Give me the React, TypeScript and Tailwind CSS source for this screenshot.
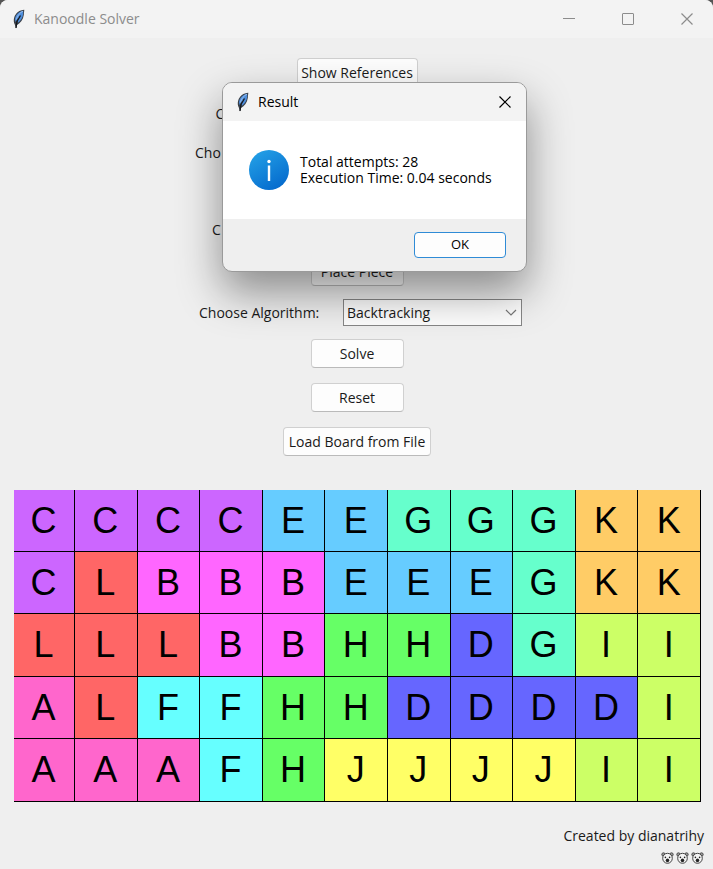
import React from "react";

const BOARD = ["CCCCEEGGGKK", "CLBBBEEEGKK", "LLLBBHHDGII", "ALFFHHDDDDI", "AAAFHJJJJII"];

const ROW_HEIGHTS = ["h-[62px]", "h-[62px]", "h-[63px]", "h-[62px]", "h-[63px]"];

const COLORS: Record<string, string> = {
  A: "bg-[#ff66cc]",
  B: "bg-[#ff66ff]",
  C: "bg-[#cc66ff]",
  D: "bg-[#6666ff]",
  E: "bg-[#66ccff]",
  F: "bg-[#66ffff]",
  G: "bg-[#66ffcc]",
  H: "bg-[#66ff66]",
  I: "bg-[#ccff66]",
  J: "bg-[#ffff66]",
  K: "bg-[#ffcc66]",
  L: "bg-[#ff6666]",
};

function Feather() {
  return (
    <svg width="15" height="20" viewBox="0 0 15 20" aria-hidden="true">
      <path d="M13.3 0.8 C8.500 1 4.600 4 3.200 8.500 C2.500 11 2.600 13.500 3.800 15.500 L5 19.500 L6 16 C9.500 14 12.200 10.500 12.800 6 Z" fill="#3a4048" />
      <path d="M12.200 1.800 C8 2.500 5 5.500 4 10 L4.500 13 L7 9 L6.600 14 C9.800 12 11.900 8.500 12.200 4.500 Z" fill="#4d8ddc" />
      <path d="M12 2.200 C9 3.500 6.500 6.500 5.300 10.500" fill="none" stroke="#a9c8ee" strokeWidth="0.8" />
      <path d="M9.500 6.500 L6 12.500 L5 19" fill="none" stroke="#15181c" strokeWidth="1.300" />
    </svg>
  );
}

function Cross() {
  return (
    <svg width="12" height="12" viewBox="0 0 12 12" fill="none" stroke="currentColor" aria-hidden="true">
      <path d="M0.500 0.500 L11.500 11.500 M11.500 0.500 L0.500 11.500" strokeWidth="1.200" />
    </svg>
  );
}

function Panda() {
  return (
    <svg width="13" height="12" viewBox="0 0 13 12" aria-hidden="true">
      <circle cx="2.500" cy="2.500" r="1.700" fill="#999" stroke="#444" strokeWidth="0.900" />
      <circle cx="10.500" cy="2.500" r="1.700" fill="#999" stroke="#444" strokeWidth="0.900" />
      <ellipse cx="6.500" cy="6.300" rx="4.800" ry="5" fill="#f4f4f4" stroke="#444" strokeWidth="1" />
      <circle cx="4.400" cy="5.400" r="0.800" fill="#222" />
      <circle cx="8.600" cy="5.400" r="0.800" fill="#222" />
      <ellipse cx="6.500" cy="8.300" rx="1.700" ry="1.900" fill="#222" />
    </svg>
  );
}

function PushButton({ children, width }: { children: React.ReactNode; width: string }) {
  return (
    <button
      type="button"
      className={`h-[29px] rounded-[4px] border border-[#d0d0d0] border-b-[#bababa] bg-[#fdfdfd] text-center whitespace-nowrap ${width}`}
    >
      {children}
    </button>
  );
}

function ResultDialog() {
  return (
    <div className="absolute inset-x-0 top-[82px] flex justify-center pl-9">
      <div
        role="dialog"
        aria-labelledby="result-title"
        className="w-[305px] overflow-hidden rounded-[10px] border border-[#9a9a9a] bg-[#efefef] text-black shadow-[0_20px_44px_rgba(0,0,0,0.42)]"
      >
        <header className="flex h-[38px] items-center bg-[#f3f3f3] pr-[15px] pb-px pl-3">
          <Feather />
          <h2 id="result-title" className="ml-2 flex-1 text-[14px]">Result</h2>
          <button type="button" aria-label="Close"><Cross /></button>
        </header>
        <div className="flex h-[98px] items-center gap-[11px] bg-white pl-[26px]">
          <svg width="40" height="40" viewBox="0 0 40 40" aria-hidden="true">
            <defs>
              <linearGradient id="info" x1="0.200" y1="0" x2="0.800" y2="1">
                <stop offset="0" stopColor="#23a0e6" />
                <stop offset="1" stopColor="#0468cc" />
              </linearGradient>
            </defs>
            <circle cx="20" cy="20" r="20" fill="url(#info)" />
            <rect x="18.800" y="15.500" width="2.400" height="15.500" fill="#fff" />
            <circle cx="20" cy="11.500" r="1.700" fill="#fff" />
          </svg>
          <p className="text-[14px] leading-4 whitespace-nowrap">
            Total attempts: 28
            <br />
            Execution Time: 0.04 seconds
          </p>
        </div>
        <footer className="flex h-[52px] items-center justify-end pr-5">
          <button type="button" className="h-[26px] w-[92px] rounded-[4px] border border-[#2f8bd6] bg-[#fdfdfd] text-[13px]">
            OK
          </button>
        </footer>
      </div>
    </div>
  );
}

export default function App() {
  return (
    <div className="bg-[#555]">
      <div className="relative min-h-screen overflow-hidden rounded-t-lg bg-[#efefef] font-['Open_Sans','Noto_Sans',sans-serif] text-[14px] text-[#1a1a1a]">
        <header className="flex h-[38px] items-center bg-[#f3f3f3] pr-5 pb-px pl-[11px] text-[#8c8c8c]">
          <Feather />
          <h1 className="ml-2 flex-1">Kanoodle Solver</h1>
          <div className="flex items-center gap-[47px]">
            <button type="button" aria-label="Minimize" className="flex h-3 w-3 items-center">
              <span className="h-px w-3 bg-current" />
            </button>
            <button type="button" aria-label="Maximize" className="h-3 w-3 rounded-[1px] border border-current" />
            <button type="button" aria-label="Close"><Cross /></button>
          </div>
        </header>

        <main className="pt-5 pr-3 pl-[14px]">
          <div className="flex flex-col items-center pr-px">
            <PushButton width="w-[121px]">Show References</PushButton>
            <div className="mt-[17px] flex w-[283px] leading-5"><span>C</span></div>
            <div className="mt-[19px] flex w-[324px] leading-5"><span>Cho</span></div>
            <div className="mt-[57px] flex w-[290px] leading-5"><span>C</span></div>
            <div className="mt-[17px] flex"><PushButton width="w-[93px]">Place Piece</PushButton></div>
            <div className="mt-[13px] flex items-center gap-[18px] pl-[7px]">
              <label htmlFor="algorithm" className="min-w-[126px]">Choose Algorithm:</label>
              <div className="relative">
                <select
                  id="algorithm"
                  className="block h-[27px] w-[179px] appearance-none border border-[#868686] bg-[#fdfdfd] pl-[3px]"
                >
                  <option>Backtracking</option>
                </select>
                <svg className="pointer-events-none absolute top-[10px] right-[5px]" width="12" height="8" viewBox="0 0 12 8" fill="none" stroke="#777" aria-hidden="true">
                  <path d="M1 1 L6 6 L11 1" strokeWidth="1.200" />
                </svg>
              </div>
            </div>
            <div className="mt-[13px] flex flex-col items-center gap-[15px]">
              <PushButton width="w-[93px]">Solve</PushButton>
              <PushButton width="w-[93px]">Reset</PushButton>
              <PushButton width="w-[148px]">Load Board from File</PushButton>
            </div>
          </div>

          <table className="mt-[34px] w-full table-fixed border-separate border-spacing-0 font-['Liberation_Sans',Arial,sans-serif] text-[36px] text-black">
            <colgroup>
              <col className="w-[61px]" />
            </colgroup>
            <tbody>
              {BOARD.map((row, r) => (
                <tr key={r} className={ROW_HEIGHTS[r]}>
                  {row.split("").map((piece, c) => (
                    <td key={c} className={`border-r border-b border-black p-0 pr-px text-center leading-10 ${COLORS[piece]}`}>
                      {piece}
                    </td>
                  ))}
                </tr>
              ))}
            </tbody>
          </table>
        </main>

        <footer className="mt-6 flex flex-col items-end pr-[9px]">
          <p className="leading-5">Created by dianatrihy</p>
          <div className="mt-[6px] flex gap-[2px]">
            <Panda />
            <Panda />
            <Panda />
          </div>
        </footer>

        <ResultDialog />
      </div>
    </div>
  );
}
